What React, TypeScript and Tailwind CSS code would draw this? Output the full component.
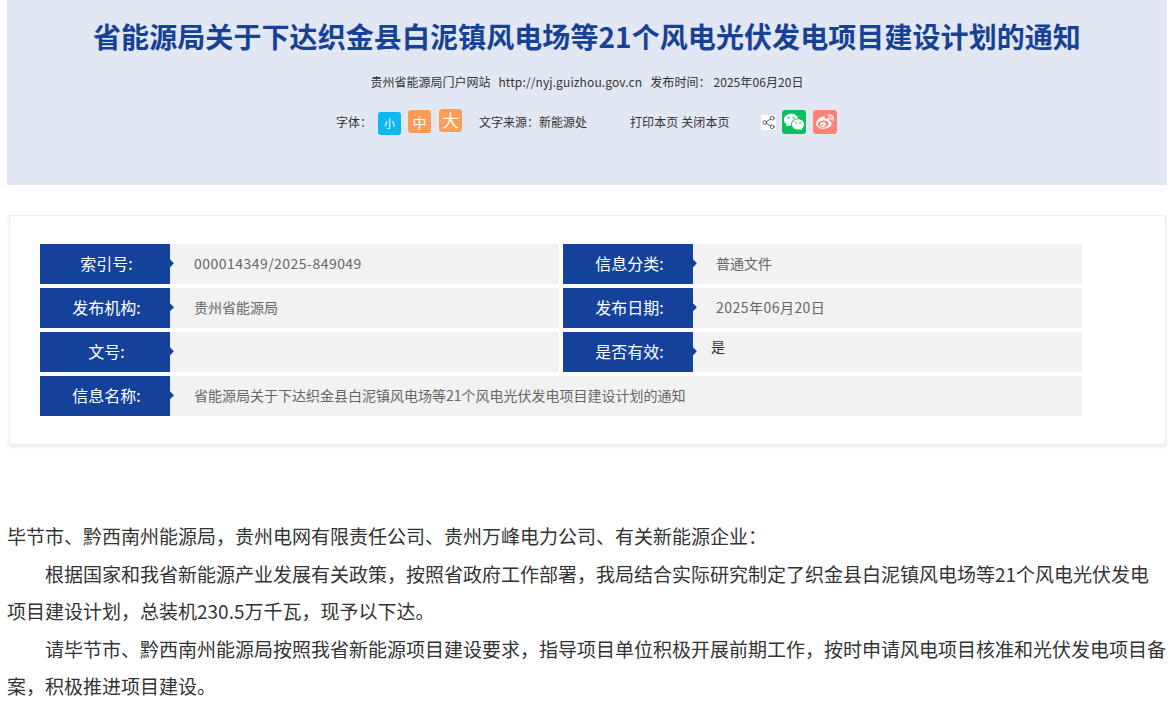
import React from "react";
import { Share2 } from "lucide-react";
import { FaWeibo } from "react-icons/fa";
import { RiWechatFill } from "react-icons/ri";

const font = "[font-family:'Noto_Sans_CJK_SC','Liberation_Sans',sans-serif]";

function Label({ text }: { text: string }) {
  return (
    <div className="relative flex h-10 w-[130px] shrink-0 items-center justify-center bg-[#14429a] pb-[2px] pl-[3px] text-base text-white">
      {text}
      <div className="absolute right-[-3px] top-[16px] h-2 w-2 rotate-45 scale-x-75 bg-[#14429a]" />
    </div>
  );
}

function Cell({ label, value, grow, right, numeric }: { label: string; value?: string; grow: string; right?: boolean; numeric?: boolean }) {
  return (
    <div className={`flex h-10 ${grow}`}>
      <Label text={label} />
      <div className={`flex min-w-0 flex-1 items-center bg-[#f2f2f2] pb-[2px] text-sm text-[#666666] ${right ? "pl-[23px]" : "pl-6"} ${numeric ? "tracking-[0.47px]" : ""}`}>
        {value}
      </div>
    </div>
  );
}

export default function App() {
  return (
    <div className={`h-[706px] w-[1173px] overflow-hidden bg-white px-[7px] ${font}`}>
      <header className="h-[185px] w-[1160px] bg-[#e1e7f3] pt-4">
        <h1 className="text-center text-[28px] font-bold leading-10 tracking-[0.08px] text-[#164194]">
          省能源局关于下达织金县白泥镇风电场等21个风电光伏发电项目建设计划的通知
        </h1>
        <div className="mt-4 flex h-5 items-center justify-center gap-2 text-xs text-[#333333]">
          <span>贵州省能源局门户网站</span>
          <span className="tracking-[0.12px]">http://nyj.guizhou.gov.cn</span>
          <span className="tracking-[0.08px]">发布时间：&nbsp;2025年06月20日</span>
        </div>
        <div className="mt-4 flex h-[28px] items-center pl-[329px] text-xs text-[#333333]">
          <span className="w-[42px]">字体：</span>
          <span className="mt-[3px] flex h-[23px] w-[23px] items-center justify-center rounded-[3px] bg-[#0db7ef] text-[11px] text-white">小</span>
          <span className="mb-[1px] ml-[7px] flex h-[23px] w-[23px] items-center justify-center rounded-[3px] bg-[#ff9c55] text-sm text-white">中</span>
          <span className="mb-[3px] ml-2 flex h-[23px] w-[23px] items-center justify-center rounded-[3px] bg-[#ff9c55] text-[17px] text-white">大</span>
          <span className="ml-[17px] w-[151px]">文字来源：新能源处</span>
          <span className="w-[100px] whitespace-nowrap tracking-[0.1px]">打印本页 关闭本页</span>
          <span className="ml-[31px] flex h-[15px] w-[15px] items-center justify-center bg-white">
            <Share2 size={15} strokeWidth={1.2} className="text-[#333333]" />
          </span>
          <span className="ml-[6px] flex h-6 w-6 items-center justify-center rounded-[3px] bg-[#07c160]">
            <RiWechatFill size={22} className="text-white" />
          </span>
          <span className="ml-[7px] flex h-6 w-6 items-center justify-center rounded-[3px] bg-[#ff8374]">
            <FaWeibo size={18} className="text-white" />
          </span>
        </div>
      </header>

      <section className="ml-[2px] mt-[30px] h-[230px] w-[1157px] border border-[#eeeeee] pl-[30px] pt-[28px] shadow-[0_2px_4px_rgba(0,0,0,0.08)]">
        <div className="flex w-[1042px] flex-col gap-1">
          <div className="flex gap-1">
            <Cell grow="w-[519px]" label="索引号:" value="000014349/2025-849049" numeric />
            <Cell grow="flex-1" label="信息分类:" value="普通文件" right />
          </div>
          <div className="flex gap-1">
            <Cell grow="w-[519px]" label="发布机构:" value="贵州省能源局" />
            <Cell grow="flex-1" label="发布日期:" value="2025年06月20日" right numeric />
          </div>
          <div className="flex gap-1">
            <Cell grow="w-[519px]" label="文号:" />
            <div className="flex h-10 flex-1">
              <Label text="是否有效:" />
              <div className="flex-1 bg-[#f2f2f2] pl-[18px] pt-[4px] text-sm leading-5 text-[#333333]">是</div>
            </div>
          </div>
          <Cell grow="w-full" label="信息名称:" value="省能源局关于下达织金县白泥镇风电场等21个风电光伏发电项目建设计划的通知" />
        </div>
      </section>

      <article className="mt-[72px] w-[1160px] text-[19px] leading-[37.5px] text-[#333333]">
        <p>毕节市、黔西南州能源局，贵州电网有限责任公司、贵州万峰电力公司、有关新能源企业：</p>
        <p className="indent-[38px]">根据国家和我省新能源产业发展有关政策，按照省政府工作部署，我局结合实际研究制定了织金县白泥镇风电场等21个风电光伏发电项目建设计划，总装机230.5万千瓦，现予以下达。</p>
        <p className="indent-[38px]">请毕节市、黔西南州能源局按照我省新能源项目建设要求，指导项目单位积极开展前期工作，按时申请风电项目核准和光伏发电项目备案，积极推进项目建设。</p>
      </article>
    </div>
  );
}
